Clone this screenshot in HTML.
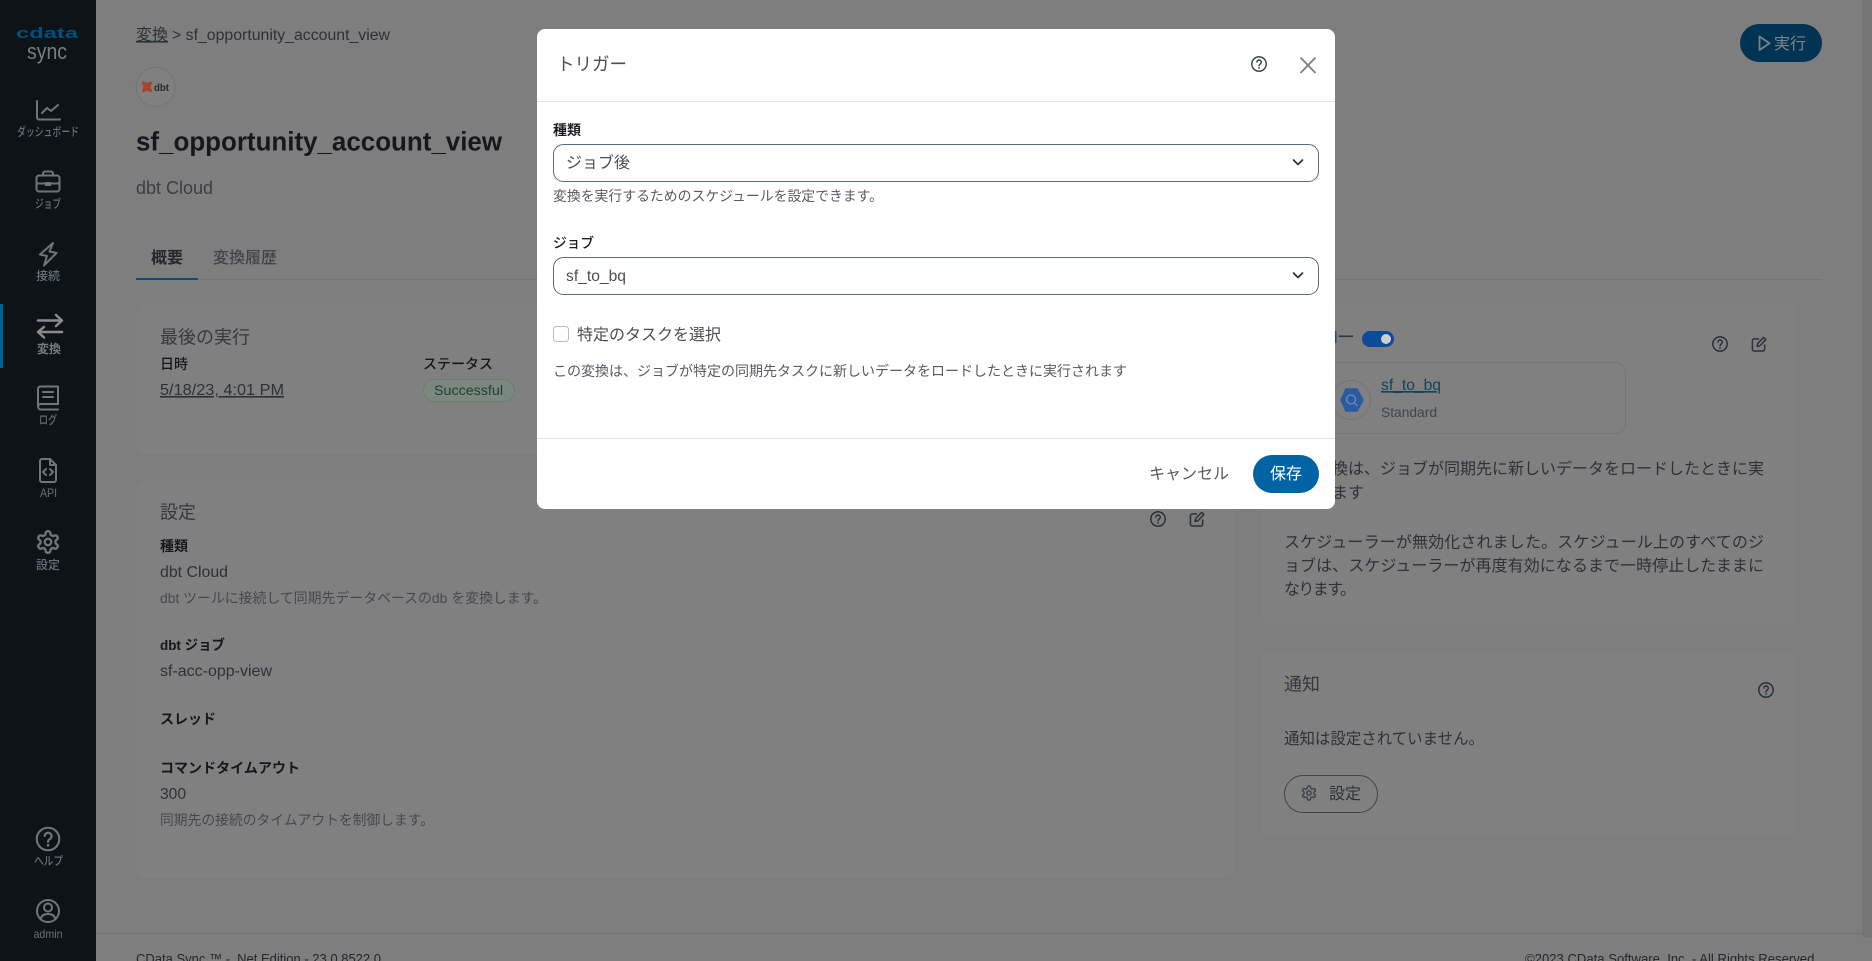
<!DOCTYPE html>
<html lang="ja">
<head>
<meta charset="utf-8">
<title>sf_opportunity_account_view</title>
<style>
html,body{margin:0;padding:0;width:1872px;height:961px;overflow:hidden;background:#7e7e7e}
svg{display:block}
text{font-family:"Liberation Sans","Noto Sans CJK JP",sans-serif;white-space:pre}
.nav{font-size:12px;fill:#667078;font-weight:500}
.ic{fill:none;stroke:#6f757a;stroke-width:2;stroke-linecap:round;stroke-linejoin:round}
.d{fill:#2c3238}
.b{fill:#14181c;font-weight:700}
.m{fill:#43494f}
.h{fill:#34393f;font-size:18px}
.dk{fill:none;stroke:#1d2a33;stroke-width:1.6;stroke-linecap:round;stroke-linejoin:round}
</style>
</head>
<body>
<svg xmlns="http://www.w3.org/2000/svg" width="1872" height="961" viewBox="0 0 1872 961">
<defs>
<symbol id="q" viewBox="0 0 24 24"><circle cx="12" cy="12" r="10.8" fill="none" stroke="currentColor" stroke-width="2"/><path d="M8.8 9.2a3.3 3.3 0 1 1 5 2.9c-1.1.7-1.8 1.4-1.8 2.7" fill="none" stroke="currentColor" stroke-width="2" stroke-linecap="round"/><circle cx="12" cy="18" r="1.3" fill="currentColor"/></symbol>
<symbol id="gear" viewBox="0 0 24 24"><path fill="none" stroke="currentColor" stroke-width="2.2" stroke-linejoin="round" d="M12.22 2h-.44a2 2 0 0 0-2 2v.18a2 2 0 0 1-1 1.73l-.43.25a2 2 0 0 1-2 0l-.15-.08a2 2 0 0 0-2.73.73l-.22.38a2 2 0 0 0 .73 2.73l.15.1a2 2 0 0 1 1 1.72v.51a2 2 0 0 1-1 1.74l-.15.09a2 2 0 0 0-.73 2.73l.22.38a2 2 0 0 0 2.73.73l.15-.08a2 2 0 0 1 2 0l.43.25a2 2 0 0 1 1 1.73V20a2 2 0 0 0 2 2h.44a2 2 0 0 0 2-2v-.18a2 2 0 0 1 1-1.73l.43-.25a2 2 0 0 1 2 0l.15.08a2 2 0 0 0 2.73-.73l.22-.39a2 2 0 0 0-.73-2.73l-.15-.08a2 2 0 0 1-1-1.74v-.5a2 2 0 0 1 1-1.74l.15-.09a2 2 0 0 0 .73-2.73l-.22-.38a2 2 0 0 0-2.73-.73l-.15.08a2 2 0 0 1-2 0l-.43-.25a2 2 0 0 1-1-1.73V4a2 2 0 0 0-2-2z"/><circle cx="12" cy="12" r="3" fill="none" stroke="currentColor" stroke-width="2.2"/></symbol>
<symbol id="edit" viewBox="0 0 17 17"><path fill="none" stroke="currentColor" stroke-width="1.6" stroke-linecap="round" stroke-linejoin="round" d="M8 3H3.5A2 2 0 0 0 1.500 5v9a2 2 0 0 0 2 2h9a2 2 0 0 0 2-2V9.500M6.500 11l.6-3L13.500 1.500l2.300 2.300L9.500 10.400z"/></symbol>
</defs>

<!-- page -->
<rect width="1872" height="961" fill="#7e7e7e"/>
<rect x="1862" y="0" width="10" height="938" rx="3" fill="#757575"/>

<!-- sidebar -->
<rect width="96" height="961" fill="#0e1318"/>
<rect x="0" y="304" width="3" height="64" fill="#00609a"/>
<text x="16" y="38" font-size="15" font-weight="700" fill="#00507f" textLength="62" lengthAdjust="spacingAndGlyphs">cdata</text>
<text x="27" y="59" font-size="22" fill="#787d81" textLength="40" lengthAdjust="spacingAndGlyphs">sync</text>

<path class="ic" d="M37 101v16.500a2 2 0 0 0 2 2h21M42 113l5-5 4 3 7-6"/>
<text class="nav" x="17" y="136" textLength="62" lengthAdjust="spacingAndGlyphs">ダッシュボード</text>

<rect class="ic" x="36.500" y="175.500" width="23" height="16" rx="2.500"/>
<path class="ic" d="M43 175v-1.500a2 2 0 0 1 2-2h6a2 2 0 0 1 2 2v1.500M37 183.500h8M51 183.500h8"/>
<rect x="45" y="182" width="6" height="4" fill="#6f757a"/>
<text class="nav" x="35" y="208" textLength="26" lengthAdjust="spacingAndGlyphs">ジョブ</text>

<path class="ic" d="M53 243L40 254.500l7 1.500-3 9.500 12.500-12.500-7-1.500z"/>
<text class="nav" x="36" y="280" textLength="24" lengthAdjust="spacingAndGlyphs">接続</text>

<path d="M38 320.500h24M56 315l6 5.500-6 5.500M62 332H38M44 327l-6 5 6 5.500" fill="none" stroke="#8a8a8a" stroke-width="2.500" stroke-linecap="round" stroke-linejoin="round"/>
<text x="37" y="353" font-size="12" font-weight="700" fill="#757b80" textLength="24" lengthAdjust="spacingAndGlyphs">変換</text>

<path class="ic" d="M38 406V389a2.500 2.500 0 0 1 2.500-2.500H58V404H41.500a3 3 0 0 0-3.500 2.800 3 3 0 0 0 3.500 2.700H58" stroke-width="2.200"/>
<path class="ic" d="M43 392h10M43 397h10" stroke-width="2.200"/>
<text class="nav" x="39" y="424" textLength="18" lengthAdjust="spacingAndGlyphs">ログ</text>

<path class="ic" d="M40 461a2 2 0 0 1 2-2h8l6 6v15a2 2 0 0 1-2 2H42a2 2 0 0 1-2-2zM50 459v6h6M46 469l-3 3 3 3M50 469l3 3-3 3"/>
<text class="nav" x="40" y="497" textLength="17" lengthAdjust="spacingAndGlyphs">API</text>

<use href="#gear" x="35" y="529" width="26" height="26" style="color:#6f757a"/>
<text class="nav" x="36" y="569" textLength="24" lengthAdjust="spacingAndGlyphs">設定</text>

<use href="#q" x="35.500" y="826.500" width="25" height="25" style="color:#6f757a"/>
<text class="nav" x="34" y="865" textLength="29" lengthAdjust="spacingAndGlyphs">ヘルプ</text>

<circle class="ic" cx="48" cy="911" r="11"/>
<circle class="ic" cx="48" cy="907.500" r="4"/>
<path class="ic" d="M40.500 919c1-3.500 4-5 7.500-5s6.500 1.500 7.500 5"/>
<text class="nav" x="33.500" y="938" textLength="29" lengthAdjust="spacingAndGlyphs">admin</text>

<!-- breadcrumb / header -->
<text class="d" x="136" y="40" font-size="16" text-decoration="underline" textLength="32">変換</text>
<text class="d" x="172" y="40" font-size="15.500" textLength="218" lengthAdjust="spacingAndGlyphs">&gt; sf_opportunity_account_view</text>
<rect x="1740" y="24" width="82" height="38" rx="19" fill="#003354"/>
<path d="M1759.500 36.500v13.500l10-6.800z" fill="none" stroke="#7a8288" stroke-width="1.800" stroke-linejoin="round"/>
<text x="1774" y="49" font-size="16" fill="#7f8488" textLength="32">実行</text>

<circle cx="155.500" cy="87" r="19.500" fill="#808080" stroke="#747474"/>
<path d="M142 83q0-2 2-1.500l3 1.500 3-1.500q2-.5 2 1.500l-1.500 4 1.500 3.500q0 2-2 1.500l-3-1.500-3 1.500q-2 .5-2-1.500l1.500-3.500z" fill="#a5452f"/>
<text x="154" y="91" font-size="10.500" font-weight="700" fill="#2a2a2e" textLength="15" lengthAdjust="spacingAndGlyphs">dbt</text>

<text x="136" y="150.500" font-size="27" font-weight="700" fill="#15191d" textLength="366" lengthAdjust="spacingAndGlyphs">sf_opportunity_account_view</text>
<text x="136" y="194" font-size="18" fill="#3a4046" textLength="77" lengthAdjust="spacingAndGlyphs">dbt Cloud</text>

<!-- tabs -->
<text x="151" y="263" font-size="16" font-weight="700" fill="#23282d" textLength="32">概要</text>
<text x="213" y="263" font-size="16" font-weight="500" fill="#3f454b" textLength="64">変換履歴</text>
<rect x="136" y="279" width="1686" height="1" fill="#747474"/>
<rect x="136" y="278" width="62" height="2" fill="#004f7f"/>

<!-- card 1 -->
<rect x="136" y="303" width="1100" height="152" rx="10" fill="#808080" stroke="#7c7c7c"/>
<text class="h" x="160" y="343.500" textLength="90">最後の実行</text>
<text x="160" y="369" font-size="14" font-weight="500" fill="#14181c" textLength="28">日時</text>
<text class="d" x="160" y="395" font-size="16" text-decoration="underline" textLength="124" lengthAdjust="spacingAndGlyphs">5/18/23, 4:01 PM</text>
<text x="423" y="369" font-size="14" font-weight="500" fill="#14181c" textLength="70">ステータス</text>
<rect x="423.500" y="379.500" width="91" height="22" rx="11" fill="#7b877f" stroke="#66806f"/>
<text x="434" y="395" font-size="14" fill="#24402f" textLength="69" lengthAdjust="spacingAndGlyphs">Successful</text>

<!-- card 2 -->
<rect x="136" y="480" width="1100" height="399" rx="10" fill="#808080" stroke="#7c7c7c"/>
<text class="h" x="160" y="518.500" textLength="36">設定</text>
<use href="#q" x="1150" y="511" width="16" height="16" style="color:#1d2a33"/>
<use href="#edit" x="1189" y="511" width="16" height="16" style="color:#2a3138"/>
<text class="b" x="160" y="551" font-size="14" textLength="28">種類</text>
<text class="d" x="160" y="577" font-size="16" textLength="68" lengthAdjust="spacingAndGlyphs">dbt Cloud</text>
<text class="m" x="160" y="603" font-size="14" textLength="387" lengthAdjust="spacingAndGlyphs">dbt ツールに接続して同期先データベースのdb を変換します。</text>
<text class="b" x="160" y="650" font-size="14" textLength="65" lengthAdjust="spacingAndGlyphs">dbt ジョブ</text>
<text class="d" x="160" y="676" font-size="16" textLength="112" lengthAdjust="spacingAndGlyphs">sf-acc-opp-view</text>
<text class="b" x="160" y="724" font-size="14" textLength="56">スレッド</text>
<text class="b" x="160" y="773" font-size="14" textLength="140">コマンドタイムアウト</text>
<text class="d" x="160" y="799" font-size="16" textLength="26" lengthAdjust="spacingAndGlyphs">300</text>
<text class="m" x="160" y="825" font-size="14" textLength="274" lengthAdjust="spacingAndGlyphs">同期先の接続のタイムアウトを制御します。</text>

<!-- right card 1 -->
<rect x="1260" y="303" width="538" height="323" rx="10" fill="#808080" stroke="#7c7c7c"/>
<text class="h" x="1229" y="343.500" textLength="126">スケジューラー</text>
<rect x="1335" y="331" width="1.500" height="12" fill="#1f4f74"/>
<rect x="1362" y="331" width="32" height="16" rx="8" fill="#0c4a9a"/>
<circle cx="1386" cy="339" r="5" fill="#cfcfcf"/>
<use href="#q" x="1712" y="336" width="16" height="16" style="color:#1d2a33"/>
<use href="#edit" x="1751" y="336" width="16" height="16" style="color:#2a3138"/>
<rect x="1284.500" y="362.500" width="341" height="71" rx="10" fill="#808080" stroke="#757575"/>
<circle cx="1351" cy="400" r="19.500" fill="#808080" stroke="#747474"/>
<path d="M1346 389h11l6 11-6 11h-11l-5-11z" fill="#2a5a9f" stroke="#2a5a9f" stroke-width="1.500" stroke-linejoin="round"/>
<circle cx="1351" cy="399.500" r="4.500" fill="none" stroke="#6f8fb8" stroke-width="1.200"/>
<path d="M1354.500 403l3 3" stroke="#6f8fb8" stroke-width="1.200"/>
<text x="1381" y="390" font-size="16" fill="#12435f" text-decoration="underline" textLength="60" lengthAdjust="spacingAndGlyphs">sf_to_bq</text>
<text x="1381" y="417" font-size="14" fill="#3f454b" textLength="56" lengthAdjust="spacingAndGlyphs">Standard</text>
<g class="d" font-size="16">
<text x="1284" y="474" textLength="480">この変換は、ジョブが同期先に新しいデータをロードしたときに実</text>
<text x="1284" y="498" textLength="80">行されます</text>
<text x="1284" y="547.500" textLength="480">スケジューラーが無効化されました。スケジュール上のすべてのジ</text>
<text x="1284" y="571" textLength="480">ョブは、スケジューラーが再度有効になるまで一時停止したままに</text>
<text x="1284" y="594.500" textLength="72">なります。</text>
</g>

<!-- right card 2 -->
<rect x="1260" y="650" width="538" height="187" rx="10" fill="#808080" stroke="#7c7c7c"/>
<text class="h" x="1284" y="690.500" textLength="36">通知</text>
<use href="#q" x="1758" y="682" width="16" height="16" style="color:#1d2a33"/>
<text class="d" x="1284" y="744" font-size="16" textLength="200" lengthAdjust="spacingAndGlyphs">通知は設定されていません。</text>
<rect x="1284.500" y="775.500" width="93" height="37" rx="18.500" fill="none" stroke="#3f454b"/>
<use href="#gear" x="1300.500" y="784.500" width="17" height="17" style="color:#3f454b"/>
<text class="d" x="1329" y="799" font-size="16" textLength="32">設定</text>

<!-- footer -->
<rect x="96" y="933" width="1766" height="1" fill="#717171"/>
<text x="136" y="963.500" font-size="14" fill="#23282d" textLength="245" lengthAdjust="spacingAndGlyphs">CData Sync ™ - .Net Edition - 23.0.8522.0</text>
<text x="1525" y="963.500" font-size="14" fill="#23282d" textLength="293" lengthAdjust="spacingAndGlyphs">©2023 CData Software, Inc. - All Rights Reserved.</text>

<!-- modal -->
<rect x="537" y="29" width="798" height="480" rx="8" fill="#ffffff"/>
<text x="557" y="70.500" font-size="18" fill="#4a4f55" textLength="70" lengthAdjust="spacingAndGlyphs">トリガー</text>
<use href="#q" x="1251" y="56" width="16" height="16" style="color:#263640"/>
<path d="M1300.500 57.500l15 15.500M1315.500 57.500l-15 15.500" fill="none" stroke="#7f7f7f" stroke-width="1.800"/>
<rect x="537" y="101" width="798" height="1" fill="#e4e4e8"/>

<text x="553" y="135" font-size="14" font-weight="700" fill="#1a1e22" textLength="28">種類</text>
<rect x="553.500" y="144.500" width="765" height="37" rx="10" fill="#fff" stroke="#5a6b7a"/>
<text x="566" y="168" font-size="16" fill="#4a4f55" textLength="64">ジョブ後</text>
<path d="M1293.500 160l4.500 4.500 4.500-4.500" fill="none" stroke="#2c3238" stroke-width="1.700" stroke-linecap="round" stroke-linejoin="round"/>
<text x="553" y="201" font-size="14" fill="#555c62" textLength="330" lengthAdjust="spacingAndGlyphs">変換を実行するためのスケジュールを設定できます。</text>

<text x="553" y="248" font-size="14" font-weight="500" fill="#1a1e22" textLength="41" lengthAdjust="spacingAndGlyphs">ジョブ</text>
<rect x="553.500" y="257.500" width="765" height="37" rx="10" fill="#fff" stroke="#5a6b7a"/>
<text x="566" y="281" font-size="16" fill="#4a4f55" textLength="60" lengthAdjust="spacingAndGlyphs">sf_to_bq</text>
<path d="M1293.500 273l4.500 4.500 4.500-4.500" fill="none" stroke="#2c3238" stroke-width="1.700" stroke-linecap="round" stroke-linejoin="round"/>

<rect x="553.500" y="326.500" width="15" height="15" rx="3" fill="#fff" stroke="#b8bcc0"/>
<text x="577" y="340" font-size="16" fill="#4a4f55" textLength="144">特定のタスクを選択</text>
<text x="553" y="376" font-size="14" fill="#555c62" textLength="574" lengthAdjust="spacingAndGlyphs">この変換は、ジョブが特定の同期先タスクに新しいデータをロードしたときに実行されます</text>

<rect x="537" y="438" width="798" height="1" fill="#e4e4e8"/>
<text x="1149" y="479" font-size="16" fill="#555a60" textLength="80" lengthAdjust="spacingAndGlyphs">キャンセル</text>
<rect x="1253" y="455" width="66" height="38" rx="19" fill="#0064a4"/>
<text x="1270" y="479" font-size="16" fill="#ffffff" textLength="32">保存</text>
</svg>
</body>
</html>
